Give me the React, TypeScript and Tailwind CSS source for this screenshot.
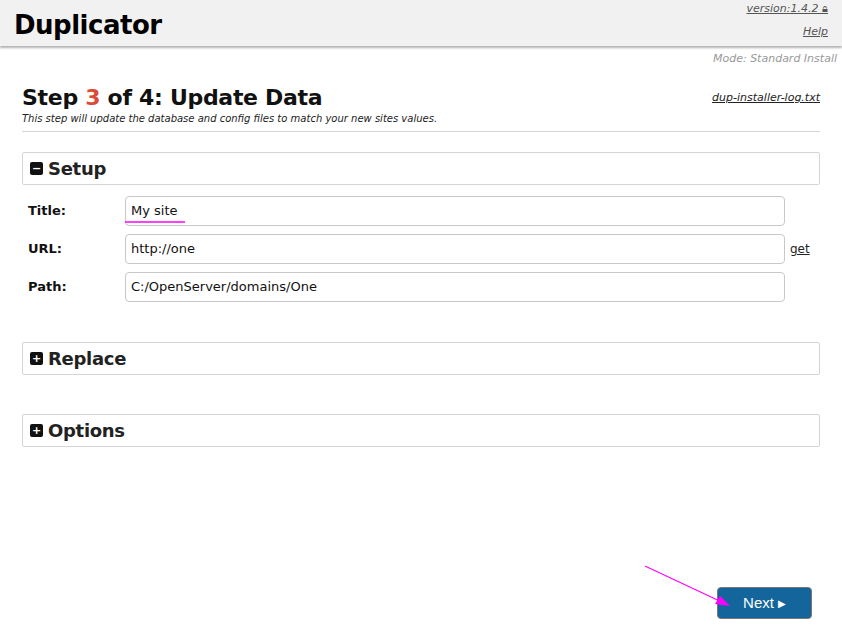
import React from 'react';

const font = { fontFamily: '"DejaVu Sans", Verdana, sans-serif' };

function Section({ title, open }: { title: string; open?: boolean }) {
  return (
    <div className="flex h-[33px] items-center gap-[5px] rounded-[2px] border border-[#d5d5d5] px-[7px]">
      <span className="flex h-[13px] w-[13px] items-center justify-center rounded-[2px] bg-[#111] text-[11px] font-bold leading-none text-white">
        {open ? '−' : '+'}
      </span>
      <span className="text-[18px] font-bold tracking-[-0.3px] text-[#222]">{title}</span>
    </div>
  );
}

function Row({ label, value, extra }: { label: string; value: string; extra?: boolean }) {
  return (
    <div className="flex h-[30px] items-center">
      <div className="w-[103px] pl-[6px] text-[13px] font-bold text-[#111]">{label}</div>
      <div className="flex h-[30px] w-[660px] items-center rounded-[4px] border border-[#c8c8c8] px-[5px] text-[13px] text-[#111]">
        {value}
      </div>
      {extra && <a className="ml-[5px] text-[12px] text-[#222] underline">get</a>}
    </div>
  );
}

export default function App() {
  return (
    <div className="relative h-[632px] w-[842px] bg-white" style={font}>
      <div className="flex h-[46px] items-start justify-between bg-[#f1f1f1] px-[14px] shadow-[0_2px_2px_rgba(0,0,0,0.3)]">
        <h1 className="pt-[6px] text-[26px] font-bold tracking-[-0.5px] text-[#000]">Duplicator</h1>
        <div className="flex flex-col items-end pt-[1px] text-[11px] italic text-[#555]">
          <span className="underline">version:1.4.2 <span className="not-italic no-underline">🔒︎</span></span>
          <span className="mt-[6px] underline">Help</span>
        </div>
      </div>
      <div className="pr-[5px] pt-[5px] text-right text-[11px] italic text-[#999]">Mode: Standard Install</div>
      <div className="mx-[22px]">
        <div className="mt-[17px] flex items-end justify-between">
          <h2 className="text-[22px] font-bold leading-[26px] tracking-[-0.3px] text-[#111]">
            Step <span className="text-[#db4b39]">3</span> of 4: Update Data
          </h2>
          <a className="mb-[4px] text-[11px] italic text-[#222] underline">dup-installer-log.txt</a>
        </div>
        <div className="text-[10px] italic text-[#222]">
          This step will update the database and config files to match your new sites values.
        </div>
        <div className="mt-[5px] border-t border-[#d5d5d5]" />
        <div className="mt-[20px]">
          <Section title="Setup" open />
        </div>
        <div className="mt-[11px] flex flex-col gap-[8px]">
          <Row label="Title:" value="My site" />
          <Row label="URL:" value="http://one" extra />
          <Row label="Path:" value="C:/OpenServer/domains/One" />
        </div>
        <div className="mt-[40px]">
          <Section title="Replace" />
        </div>
        <div className="mt-[39px]">
          <Section title="Options" />
        </div>
      </div>
      <button className="absolute left-[717px] top-[587px] flex h-[32px] w-[95px] items-center justify-center gap-[4px] rounded-[4px] border border-[#777] bg-[#13659c] text-[15px] text-white" style={{ fontFamily: '"Liberation Sans", Arial, sans-serif' }}>
        Next <span className="text-[10px]">▶</span>
      </button>
      <svg className="pointer-events-none absolute left-0 top-0" width="842" height="632">
        <line x1="125" y1="222" x2="185" y2="222" stroke="#f0f" strokeWidth="1.5" />
        <line x1="645" y1="566" x2="726" y2="604" stroke="#f0f" strokeWidth="1.2" />
        <polygon points="730,606 715,604 720,596" fill="#f0f" />
      </svg>
    </div>
  );
}
